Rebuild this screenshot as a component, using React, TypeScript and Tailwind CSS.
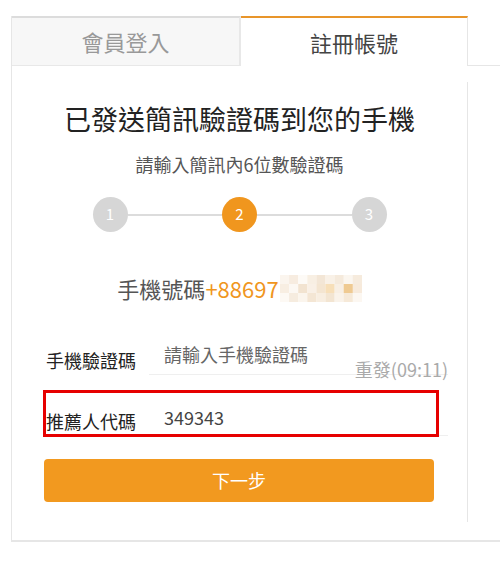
import React from 'react';

const mosaic = [
  ['#fbf5ee', '#f7ece0', '#fdfaf6', '#f8efe3', '#f3e6d6', '#f9f1e7', '#f5eadc', '#fbf6ef', '#f6ebdd'],
  ['#f8eee2', '#fcf8f3', '#f2e3d0', '#f9f0e6', '#f4e5d1', '#f7dfb9', '#f8efe4', '#efca92', '#f7eadb'],
  ['#fdf9f4', '#f6ecdf', '#fbf5ed', '#f4e6d4', '#f8eee1', '#f3e5d2', '#faf3ea', '#f6e9d8', '#fcf7f1'],
];

function Mosaic() {
  return (
    <svg width="82" height="27" viewBox="0 0 82 27" className="ml-px">
      {mosaic.map((row, r) =>
        row.map((c, i) => (
          <rect key={`${r}-${i}`} x={i * 9.1} y={r * 9} width="9.2" height="9" fill={c} />
        ))
      )}
    </svg>
  );
}

function Steps() {
  return (
    <div className="mx-auto mt-[21px] flex h-[35px] w-[294px] items-center">
      <div className="flex h-[35px] w-[35px] items-center justify-center rounded-full bg-[#d6d6d6] text-[15px] text-white">1</div>
      <div className="h-[2px] flex-1 bg-[#dcdcdc]" />
      <div className="flex h-[35px] w-[35px] items-center justify-center rounded-full bg-[#f0961e] text-[15px] text-white">2</div>
      <div className="h-[2px] flex-1 bg-[#dcdcdc]" />
      <div className="flex h-[35px] w-[35px] items-center justify-center rounded-full bg-[#d6d6d6] text-[15px] text-white">3</div>
    </div>
  );
}

export default function App() {
  return (
    <div className="w-full bg-white pt-[16px] pl-[11px] font-['Noto_Sans_CJK_TC',sans-serif]">
      <div className="border-b-2 border-l border-[#e6e6e6] pb-[18px]">
        {/* Tabs */}
        <div className="flex">
          <div className="flex w-[456px]">
            <div className="flex h-[50px] w-[229px] items-center justify-center border-t-2 border-r-2 border-b border-t-[#dcdcdc] border-r-[#e8e8e8] border-b-[#e8e8e8] bg-[#f7f7f7] text-[22px] text-[#999]">
              會員登入
            </div>
            <div className="flex h-[50px] flex-1 items-center justify-center border-t-2 border-r border-t-[#e8952a] border-r-[#e6e6e6] text-[22px] text-[#444]">
              註冊帳號
            </div>
          </div>
          <div className="h-[50px] flex-1 border-b border-[#e6e6e6]" />
        </div>

        {/* Panel */}
        <div className="mt-[16px] w-[456px] border-r border-[#e6e6e6] px-[33px] pt-[19px] pb-[20px]">
          <h1 className="h-[36px] text-center text-[27px] leading-[36px] text-[#222]">已發送簡訊驗證碼到您的手機</h1>
          <p className="mt-[15px] text-center text-[18px] leading-[24px] text-[#555]">請輸入簡訊內6位數驗證碼</p>

          <Steps />

          <div className="mt-[41px] flex h-[30px] items-center justify-center text-[22px] leading-[30px] text-[#555]">
            <span>手機號碼</span>
            <span className="text-[#f0961e]">+88697</span>
            <Mosaic />
          </div>

          {/* Row 1 */}
          <div className="relative mt-[32px] flex w-[403px] items-end">
            <label className="mb-[3px] w-[104px] pl-px text-[18px] leading-[24px] text-[#222]">手機驗證碼</label>
            <div className="flex h-[40px] flex-1 items-center border-b border-[#efefef] pl-[15px] text-[18px] text-[#666]">
              請輸入手機驗證碼
            </div>
            <span className="absolute right-0 bottom-[-6px] text-[18px] leading-[24px] text-[#aaa]">重發(09:11)</span>
          </div>

          {/* Row 2 */}
          <div className="relative mt-[21px] flex w-[403px] items-end">
            <label className="mb-[3px] w-[104px] pl-px text-[18px] leading-[24px] text-[#222]">推薦人代碼</label>
            <div className="flex h-[40px] flex-1 items-center border-b border-[#efefef] pt-[3px] pl-[15px] text-[18px] text-[#444]">
              349343
            </div>
            <div className="pointer-events-none absolute top-[-6px] left-[-2px] h-[47px] w-[396px] border-[3.5px] border-[#e60000]" />
          </div>

          <button className="mt-[23px] -ml-px flex h-[43px] w-[390px] items-center justify-center rounded-[4px] bg-[#f2991f] text-[18px] text-white">
            下一步
          </button>
        </div>
      </div>
    </div>
  );
}
